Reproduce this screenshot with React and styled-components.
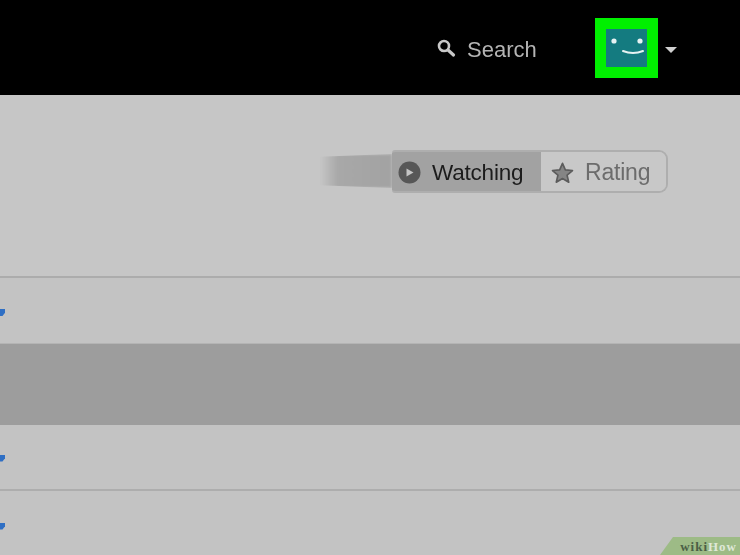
import styled, { createGlobalStyle } from "styled-components";

const GlobalStyle = createGlobalStyle`
  html, body {
    margin: 0;
    padding: 0;
    width: 740px;
    height: 555px;
    overflow: hidden;
    background: #c3c3c3;
    font-family: "Liberation Sans", Arial, sans-serif;
  }
`;

const Page = styled.div`
  position: relative;
  width: 740px;
  height: 555px;
  overflow: hidden;
  display: flex;
  flex-direction: column;
  background: #c3c3c3;
`;

const Header = styled.header`
  height: 95px;
  flex-shrink: 0;
  background: #000;
  display: flex;
  align-items: center;
  padding-left: 437px;
  box-sizing: border-box;
`;

const SearchLink = styled.div`
  display: flex;
  align-items: center;
  gap: 11px;
  width: 158px;
  margin-top: 5px;
  color: #b4b4b4;
  font-size: 22px;
  filter: blur(0.4px);
`;

const Avatar = styled.div`
  width: 63px;
  height: 60px;
  margin-top: 1px;
  box-sizing: border-box;
  border: 11px solid #00f000;
  background: #147b80;
  display: flex;
`;

const Caret = styled.div`
  width: 0;
  height: 0;
  margin: 4px 0 0 7px;
  border-left: 6px solid transparent;
  border-right: 6px solid transparent;
  border-top: 6px solid #d0d0d0;
`;

const Hero = styled.section`
  height: 183px;
  flex-shrink: 0;
  box-sizing: border-box;
  border-bottom: 2px solid #acacac;
  padding: 55px 72px 0 320px;
  display: flex;
  align-items: flex-start;
  background: #c6c6c6;
`;

const Smear = styled.div`
  width: 72px;
  height: 34px;
  margin-top: 4px;
  background: linear-gradient(90deg, #c6c6c6 0%, #a8a8a8 25%, #a2a2a2 100%);
  clip-path: polygon(0 8%, 100% 0, 100% 100%, 0 92%);
  filter: blur(1.5px);
`;

const Toggle = styled.div`
  display: flex;
  width: 276px;
  height: 43px;
  box-sizing: border-box;
  border: 2px solid #aeaeae;
  border-left: none;
  border-radius: 3px 9px 9px 3px;
  overflow: hidden;
  filter: blur(0.4px);
`;

const ToggleItem = styled.div`
  display: flex;
  align-items: center;
  box-sizing: border-box;
  width: ${({ $active }) => ($active ? "149px" : "125px")};
  padding-left: ${({ $active }) => ($active ? "6px" : "10px")};
  gap: 11px;
  background: ${({ $active }) => ($active ? "#a2a2a2" : "#c8c8c8")};
  color: ${({ $active }) => ($active ? "#1c1c1c" : "#6c6c6c")};
  font-size: ${({ $active }) => ($active ? "22.5px" : "23px")};
  padding-top: 2px;
  letter-spacing: -0.2px;
`;

const Row = styled.div`
  height: ${({ $height }) => $height}px;
  flex-shrink: 0;
  box-sizing: border-box;
  background: ${({ $dark }) => ($dark ? "#9d9d9d" : "#c3c3c3")};
  border-bottom: ${({ $line }) => ($line ? "2px solid #adadad" : "none")};
  border-top: ${({ $dark }) => ($dark ? "1px solid #b4b4b4" : "none")};
  display: flex;
  align-items: center;
`;

const Marker = styled.div`
  width: 5px;
  height: 7px;
  margin-top: ${({ $offset }) => $offset}px;
  background: #2f6fc4;
  clip-path: polygon(0 0, 100% 0, 100% 55%, 50% 100%, 0 100%);
  filter: blur(0.3px);
`;

const WatermarkShape = styled.div`
  position: absolute;
  right: 0;
  bottom: 0;
  width: 80px;
  height: 18px;
  background: #9dbb86;
  clip-path: polygon(13px 0, 100% 0, 100% 100%, 0 100%);
  display: flex;
  align-items: center;
  justify-content: flex-end;
  padding: 2px 3px 0 0;
  box-sizing: border-box;
  font-family: "Liberation Serif", "Times New Roman", serif;
  font-weight: bold;
  font-size: 13px;
  letter-spacing: 1px;
`;

const WikiText = styled.span`
  color: #4b5f45;
`;

const HowText = styled.span`
  color: #dfe8d8;
`;

const SearchIcon = () => (
  <svg width="19" height="19" viewBox="0 0 19 19" fill="none" style={{ marginTop: -4 }}>
    <circle cx="7" cy="7" r="5" stroke="#c8c8c8" strokeWidth="2.6" />
    <path d="M11 11L16.5 16" stroke="#c8c8c8" strokeWidth="3.2" strokeLinecap="round" />
  </svg>
);

const Smile = () => (
  <svg width="41" height="38" viewBox="0 0 41 38">
    <circle cx="8" cy="12" r="2.6" fill="#e6f2f2" />
    <circle cx="34" cy="12" r="2.6" fill="#e6f2f2" />
    <path d="M17 22Q27 26 37 22" stroke="#e6f2f2" strokeWidth="2" fill="none" strokeLinecap="round" />
  </svg>
);

const PlayIcon = () => (
  <svg width="23" height="23" viewBox="0 0 23 23">
    <circle cx="11.5" cy="11.5" r="11" fill="#575757" />
    <path d="M8.5 7.5L15.5 11.5L8.5 15.5Z" fill="#c4c4c4" />
  </svg>
);

const StarIcon = () => (
  <svg width="23" height="22" viewBox="0 0 25 24">
    <path
      d="M12.5 1.5L15.6 8.6L23.4 9.3L17.5 14.4L19.3 22L12.5 18L5.7 22L7.5 14.4L1.6 9.3L9.4 8.6Z"
      fill="#858585"
      stroke="#5c5c5c"
      strokeWidth="1.8"
      strokeLinejoin="round"
    />
  </svg>
);

export default function App() {
  return (
    <>
      <GlobalStyle />
      <Page>
        <Header>
          <SearchLink>
            <SearchIcon />
            <span>Search</span>
          </SearchLink>
          <Avatar>
            <Smile />
          </Avatar>
          <Caret />
        </Header>
        <Hero>
          <Smear />
          <Toggle>
            <ToggleItem $active>
              <PlayIcon />
              <span>Watching</span>
            </ToggleItem>
            <ToggleItem>
              <StarIcon />
              <span>Rating</span>
            </ToggleItem>
          </Toggle>
        </Hero>
        <Row $height={65}>
          <Marker $offset={4} />
        </Row>
        <Row $height={82} $dark />
        <Row $height={66} $line>
          <Marker $offset={2} />
        </Row>
        <Row $height={64}>
          <Marker $offset={6} />
        </Row>
        <WatermarkShape>
          <WikiText>wiki</WikiText>
          <HowText>How</HowText>
        </WatermarkShape>
      </Page>
    </>
  );
}
